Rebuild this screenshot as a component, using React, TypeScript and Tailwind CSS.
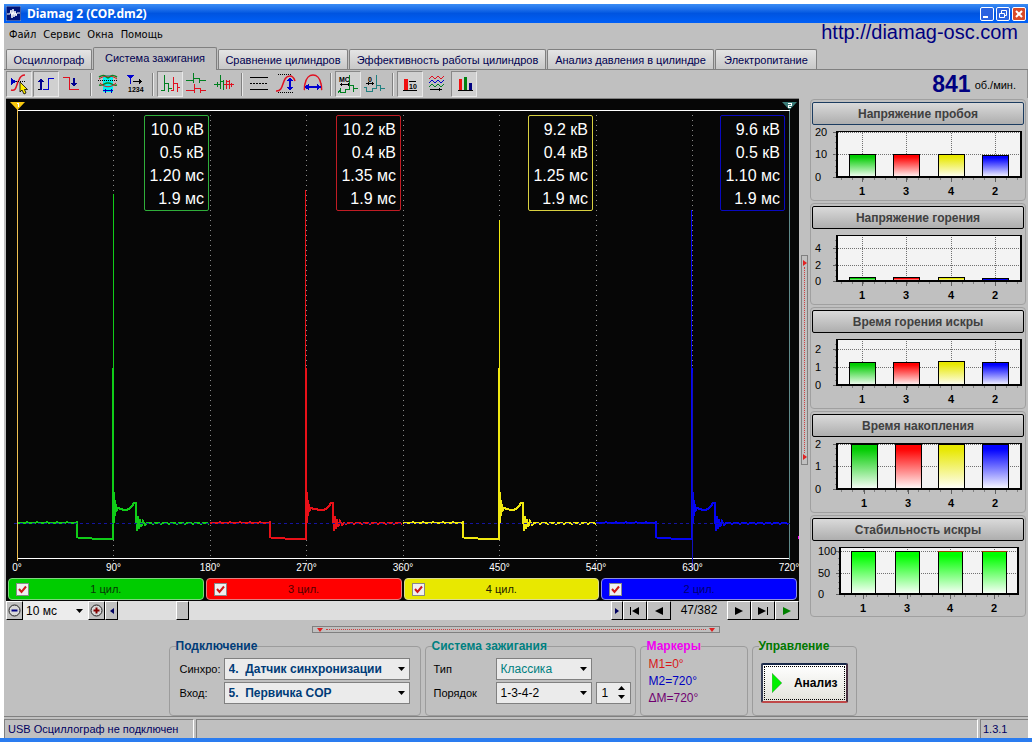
import { useState } from "react";
import type { ReactNode } from "react";

const tabs = [
  { name: "Осциллограф", width: "w-[86px]" },
  { name: "Система зажигания", width: "w-[124px]" },
  { name: "Сравнение цилиндров", width: "w-[130px]" },
  { name: "Эффективность работы цилиндров", width: "w-[197px]" },
  { name: "Анализ давления в цилиндре", width: "w-[167px]" },
  { name: "Электропитание", width: "w-[102px]" },
];

const cylinders = [
  { id: 1, line: "#10cc18", box: "border-[#2fae3a]", bar: "bg-[#00cc00] border-[#7fd67f]", ink: "text-[#063806]", peak: 96, burn: 0, values: ["10.0 кВ", "0.5 кВ", "1.20 мс", "1.9 мс"] },
  { id: 3, line: "#e81018", box: "border-[#c01c24]", bar: "bg-[#ff0000] border-[#e08080]", ink: "text-[#500000]", peak: 92, burn: 4, values: ["10.2 кВ", "0.4 кВ", "1.35 мс", "1.9 мс"] },
  { id: 4, line: "#f0e810", box: "border-[#d8d040]", bar: "bg-[#e8e800] border-[#dcdc90]", ink: "text-[#202000]", peak: 122, burn: 1, values: ["9.2 кВ", "0.4 кВ", "1.25 мс", "1.9 мс"] },
  { id: 2, line: "#0404f4", box: "border-[#0808c0]", bar: "bg-[#0000ff] border-[#9090e0]", ink: "text-[#000070]", peak: 112, burn: 0, values: ["9.6 кВ", "0.5 кВ", "1.10 мс", "1.9 мс"] },
];

const rainbow = ["#00cc00", "#ff0000", "#e8e800", "#0000ff"];
const lime = ["#00ff00", "#00ff00", "#00ff00", "#00ff00"];

type Chart = {
  id: string;
  title: string;
  left: number;
  right: number;
  top: number;
  ticks: [string, number][];
  xs: number[];
  tops: number[];
  colors: string[];
};

const charts: Chart[] = [
  { id: "a", title: "Напряжение пробоя", left: 22, right: 207, top: 5, ticks: [["20", 6], ["10", 28], ["0", 51]], xs: [48, 92, 137, 181], tops: [28, 28, 28, 29], colors: rainbow },
  { id: "b", title: "Напряжение горения", left: 22, right: 207, top: 5, ticks: [["4", 18], ["2", 35], ["0", 51]], xs: [48, 92, 137, 181], tops: [47, 47, 47, 48], colors: rainbow },
  { id: "c", title: "Время горения искры", left: 22, right: 207, top: 5, ticks: [["2", 15], ["1", 33], ["0", 51]], xs: [48, 92, 137, 181], tops: [28, 28, 27, 28], colors: rainbow },
  { id: "d", title: "Время накопления", left: 22, right: 207, top: 5, ticks: [["2", 6], ["1", 28], ["0", 51]], xs: [50, 94, 137, 181], tops: [6, 6, 6, 6], colors: rainbow },
  { id: "e", title: "Стабильность искры", left: 25, right: 204, top: 5, ticks: [["100", 9], ["50", 31], ["0", 52]], xs: [49, 93, 136, 180], tops: [9, 9, 9, 9], colors: lime },
];

// one ignition period of the primary winding, 193 px wide
function wave(x: number, burn: number) {
  let d = `M${x} 425`;
  for (let i = 2; i <= 60; i += 2) d += `L${x + i} ${i % 10 === 0 ? 424 : 425}`;
  d += `V439`;
  for (let i = 62; i <= 94; i += 2) d += `L${x + i} ${i < 76 ? 440 : 441}`;
  d += `H${x + 96}V270V441V398L${x + 97} 422L${x + 98} 402L${x + 98} 418L${x + 99} 406V414`;
  const b = x + burn;
  d += `L${x + 101} 410L${x + 104} 411L${b + 107} 412L${b + 109} 412L${b + 112} 411L${b + 115} 408L${b + 117} 405L${b + 119} 405`;
  d += `V418`;
  return d;
}

function tail(x: number, burn: number) {
  const b = x + burn;
  let d = `M${b + 119} 418V425H${b + 120}V433L${b + 121} 418L${b + 122} 431L${b + 123} 421L${b + 124} 429L${b + 126} 423L${b + 128} 427`;
  for (let i = 130 + burn; i <= 193; i += 2) d += `L${x + i} ${i % 8 < 2 ? 426 : 425}`;
  return d;
}

function Scope() {
  return (
    <div className="relative bg-[#060606]">
      <svg viewBox="0 0 793 479" className="block w-full" shapeRendering="crispEdges" fontFamily='"Liberation Sans", Arial, sans-serif'>
        <path d="M0 0.5H793" stroke="#808080" />
        <path d="M11 12.5H784M11 460.5H784" stroke="#ffffff" />
        <path d="M783.5 13V462" stroke="#5f8a8a" />
        {[1, 2, 3, 4, 5, 6, 7].map((n) => (
          <path key={n} d={`M${Math.floor(11 + n * 96.5) + 0.5} 17V463`} stroke="#8a8a8a" strokeDasharray="1 4" />
        ))}
        {cylinders.map((c, i) => (
          <g key={c.id} fill="none" stroke={c.line}>
            <path d={wave(11 + i * 193, c.burn)} strokeWidth="2" />
            <path d={tail(11 + i * 193, c.burn)} strokeWidth="2" />
            <path d={`M${(i % 2 ? 106.5 : 107.5) + i * 193} ${c.peak}V280`} />
            <path d={`M${108 + i * 193} 394V425`} strokeWidth="2" />
            <path d={`M${131.5 + c.burn + i * 193} 419V430`} strokeWidth="3" />
          </g>
        ))}
        <path d="M8 425.500H784" stroke="#1414a0" strokeDasharray="3 3" />
        <path d="M686.5 275V472" stroke="#1010c0" />
        <path d="M11.5 10V463" stroke="#f0c050" />
        <path d="M4 4H19L11.5 12Z" fill="#f8c810" shapeRendering="auto" />
        <path d="M776 4H791L783.5 12Z" fill="#3a7c78" shapeRendering="auto" />
        <path d="M11 5h1v4" stroke="#ffffff" fill="none" />
        <path d="M782 5.500h3v2h-3v2h3" stroke="#ffffff" fill="none" />
        <g fill="#ffffff" fontSize="10" textAnchor="middle">
          {[0, 90, 180, 270, 360, 450, 540, 630, 720].map((deg) => (
            <text key={deg} x={11 + (deg / 90) * 96.5} y="473">{deg}°</text>
          ))}
        </g>
        <path d="M792 439h1" stroke="#ff00ff" strokeWidth="3" />
      </svg>
      <div className="absolute top-[17px] right-[14px] left-[11px] flex">
        {cylinders.map((c) => (
          <div key={c.id} className="flex flex-1 justify-end">
            <div className={`h-[96px] w-[65px] rounded-xs border pt-[2px] pr-1 text-right text-[16px] leading-[23px] text-white ${c.box}`}>
              {c.values.map((v, i) => (
                <div key={i} className="whitespace-nowrap">{v}</div>
              ))}
            </div>
          </div>
        ))}
      </div>
    </div>
  );
}

function CylinderBar() {
  const [shown, setShown] = useState([1, 2, 3, 4]);
  const toggle = (id: number) => {
    setShown(shown.includes(id) ? shown.filter((s) => s !== id) : [...shown, id]);
  };
  return (
    <div className="flex h-[24px] gap-[2px] bg-[#060606] px-[2px] pt-px pb-px">
      {cylinders.map((c) => (
        <label key={c.id} className={`flex flex-1 items-center rounded-sm border pl-[7px] text-[11px] ${c.bar}`}>
          <input
            type="checkbox"
            checked={shown.includes(c.id)}
            onChange={() => toggle(c.id)}
            className="peer h-[13px] w-[13px] appearance-none border border-[#8a8a8a] bg-[#f0f0f0]"
          />
          <svg viewBox="0 0 13 13" className="-ml-[13px] hidden h-[13px] w-[13px] peer-checked:block">
            <path d="M3 6L5.500 9L10 3.500" fill="none" stroke="#d01818" strokeWidth="2" />
          </svg>
          <span className={`flex-1 pr-[20px] text-center ${c.ink}`}>{c.id} цил.</span>
        </label>
      ))}
    </div>
  );
}

function NavButton({ label, width, children }: { label: string; width: string; children: ReactNode }) {
  return (
    <button aria-label={label} className={`flex items-center justify-center border-t border-r border-b border-l border-t-white border-r-black border-b-black border-l-white bg-[#c0c0c0] ${width}`}>
      {children}
    </button>
  );
}

function PlayBar() {
  return (
    <div className="flex h-[19px] bg-[#dedede]">
      <NavButton label="Уменьшить" width="w-[17px]">
        <svg viewBox="0 0 13 13" className="h-[13px] w-[13px]">
          <circle cx="6.500" cy="6.500" r="5.500" fill="#d8d8d8" stroke="#202020" />
          <path d="M3.500 6.500h6" stroke="#000080" strokeWidth="2" />
        </svg>
      </NavButton>
      <div className="relative w-[65px]">
        <select aria-label="Развертка" className="h-full w-full appearance-none bg-[#ececec] pl-[3px] text-[12px] leading-[16px]">
          <option>10 мс</option>
        </select>
        <Caret />
      </div>
      <NavButton label="Увеличить" width="w-[17px]">
        <svg viewBox="0 0 13 13" className="h-[13px] w-[13px]">
          <circle cx="6.500" cy="6.500" r="5.500" fill="#d8d8d8" stroke="#202020" />
          <path d="M3.500 6.500h6M6.500 3.500v6" stroke="#800000" strokeWidth="2" />
        </svg>
      </NavButton>
      <NavButton label="Назад" width="w-[13px]">
        <svg viewBox="0 0 4 6" className="h-[6px] w-[4px]"><path d="M4 0V6L0 3Z" fill="#000060" /></svg>
      </NavButton>
      <div className="flex flex-1 pl-[58px]">
        <div className="w-[13px] border-t border-r border-b border-l border-t-white border-r-black border-b-black border-l-white bg-[#c0c0c0]" />
      </div>
      <NavButton label="Вперед" width="w-[12px]">
        <svg viewBox="0 0 4 6" className="h-[6px] w-[4px]"><path d="M0 0V6L4 3Z" fill="#000060" /></svg>
      </NavButton>
      <NavButton label="В начало" width="w-[24px]">
        <svg viewBox="0 0 10 8" className="h-[8px] w-[10px]"><path d="M0 0h1v8h-1zM9 0V8L2 4Z" /></svg>
      </NavButton>
      <NavButton label="Предыдущий кадр" width="w-[24px]">
        <svg viewBox="0 0 8 8" className="h-[8px] w-[8px]"><path d="M8 0V8L0 4Z" /></svg>
      </NavButton>
      <span className="w-[56px] bg-[#c0c0c0] text-center text-[12px] leading-[19px]">47/382</span>
      <NavButton label="Следующий кадр" width="w-[24px]">
        <svg viewBox="0 0 8 8" className="h-[8px] w-[8px]"><path d="M0 0V8L8 4Z" /></svg>
      </NavButton>
      <NavButton label="В конец" width="w-[24px]">
        <svg viewBox="0 0 10 8" className="h-[8px] w-[10px]"><path d="M9 0h1v8h-1zM0 0V8L8 4Z" /></svg>
      </NavButton>
      <NavButton label="Воспроизвести" width="w-[24px]">
        <svg viewBox="0 0 8 8" className="h-[8px] w-[8px]"><path d="M0 0V8L8 4Z" fill="#008000" /></svg>
      </NavButton>
    </div>
  );
}

function Caret() {
  return (
    <svg viewBox="0 0 7 4" className="pointer-events-none absolute top-1/2 right-[5px] h-[4px] w-[7px] -translate-y-1/2">
      <path d="M0 0H7L3.500 4Z" />
    </svg>
  );
}

function ChartCard({ chart }: { chart: Chart }) {
  const { id, left, right, top, ticks, xs, tops, colors } = chart;
  const zero = ticks[2][1];
  const barWidth = id === "e" ? 24 : 26;
  const minor = [];
  for (let x = left + 5; x < right; x += 11) minor.push(x);
  const minorY = [];
  for (let y = top + 5; y < zero; y += 6) minorY.push(y);
  return (
    <section className="h-[102px] rounded-sm border border-[#a0a0a0] px-px pt-[2px]">
      <button
        className={`block h-[23px] w-full rounded-xs border bg-linear-to-b from-[#dadada] to-[#aeaeae] text-[12px] leading-[22px] font-bold text-[#404040] ${id === "a" ? "border-[#1c3c60]" : "border-black"}`}
      >
        {chart.title}
      </button>
      <svg viewBox="-2 -1 212 74" className="block w-full" shapeRendering="crispEdges" fontFamily='"Liberation Sans", Arial, sans-serif'>
        <defs>
          {colors.map((c, i) => (
            <linearGradient key={i} id={`fill-${id}-${i}`} x1="0" y1="0" x2="0" y2="1">
              <stop offset="10%" stopColor={c} />
              <stop offset="100%" stopColor="#ffffff" />
            </linearGradient>
          ))}
        </defs>
        <rect x={left + 1} y={top} width={right - left} height={zero - top} fill="#f3f3f3" />
        {ticks.map(([text, y]) => (
          <g key={text}>
            <path d={`M${left} ${y + 0.5}H${right}`} stroke="#707070" strokeDasharray="1 1" />
            <path d={`M${left - 3} ${y + 0.5}H${left}`} stroke="#606060" />
            <text x={id === "e" ? 4 : 1} y={y + 4} fontSize="11" shapeRendering="auto">{text}</text>
          </g>
        ))}
        {xs.map((x) => (
          <path key={x} d={`M${x + 0.5} ${top}V${zero}`} stroke="#707070" strokeDasharray="1 1" />
        ))}
        {minor.map((x) => (
          <path key={x} d={`M${x + 0.5} ${zero}v3`} stroke="#808080" />
        ))}
        {minorY.map((y) => (
          <path key={y} d={`M${left - 1} ${y + 0.5}h2`} stroke="#808080" />
        ))}
        {xs.map((x, i) => (
          <g key={x}>
            <rect x={x - barWidth / 2 + 0.5} y={tops[i] + 0.5} width={barWidth} height={zero - tops[i]} fill={`url(#fill-${id}-${i})`} stroke="#000000" />
            <path d={`M${x + 0.5} ${zero}v5`} stroke="#606060" />
            <text x={x} y={zero + 18} fontSize="11" fontWeight="bold" textAnchor="middle">{[1, 3, 4, 2][i]}</text>
          </g>
        ))}
        {id === "b" && tops.map((y, i) => (
          <path key={i} d={`M${xs[i] - 12} ${y + 1.5}h25`} stroke={colors[i]} />
        ))}
        {id === "e" && [xs[2], xs[3]].map((x) => (
          <path key={x} d={`M${x - 12} 9.500h25`} stroke="#a04000" />
        ))}
        <path d={`M${left} ${top + 0.5}H${right}`} stroke="#000000" />
        <path d={`M${left + 1} ${top}V${zero + 1}M${right} ${top}V${zero + 1}M${left} ${zero}H${right + 1}`} stroke="#000000" strokeWidth="2" fill="none" />
      </svg>
    </section>
  );
}

function Tool({ label, on, children }: { label: string; on?: boolean; children: ReactNode }) {
  return (
    <button
      aria-label={label}
      aria-pressed={!!on}
      className={`flex h-[26px] w-[26px] items-center justify-center border ${on ? "border-t-[#888888] border-r-[#e8e8e8] border-b-[#e8e8e8] border-l-[#888888] bg-[#d0d0d0]" : "border-transparent"}`}
    >
      <svg viewBox="0 0 24 24" className="h-[24px] w-[24px]" fill="none" shapeRendering="crispEdges" fontFamily='"Liberation Sans", Arial, sans-serif'>
        {children}
      </svg>
    </button>
  );
}

function Separator() {
  return <div className="mr-[2px] ml-[3px] h-[23px] w-[2px] border-r border-l border-r-[#e8e8e8] border-l-[#808080]" />;
}

function Toolbar() {
  return (
    <div className="flex items-center gap-px pt-px pl-[2px]">
      <Tool label="Синхронизация" on>
        <path d="M4 18C10 20 9 12 12 8C13 5 15 3 18 3" stroke="#e01020" strokeWidth="1.500" shapeRendering="auto" />
        <path d="M4 6V13L9 9.500Z" fill="#0000c0" />
        <path d="M9 9.500H19" stroke="#000000" strokeDasharray="1 1" />
        <path d="M13 10V20L15 18L17 22L19 21L17.500 17.500H20.500Z" fill="#ffee00" stroke="#000000" strokeWidth="0.800" shapeRendering="auto" />
      </Tool>
      <Tool label="Фронт" on>
        <path d="M4 17.500H7" stroke="#000000" />
        <path d="M7 8V18" stroke="#000090" strokeWidth="2" />
        <path d="M4 10H10L7 6Z" fill="#000090" />
        <path d="M9 17.500H14.500V6.500H20" stroke="#0000d0" />
      </Tool>
      <Tool label="Спад">
        <path d="M2 5.500H8.500V17.500H18" stroke="#e01020" strokeWidth="1.200" />
        <path d="M13 6V13" stroke="#000090" strokeWidth="2" />
        <path d="M10 11H16L13 15Z" fill="#000090" />
      </Tool>
      <Separator />
      <Tool label="Ширина окна">
        <rect x="7" y="3" width="10" height="17" fill="#00f0f0" />
        <path d="M3 5C8 2 9 4 12 6C15 4 16 2 21 5M3 13C8 14 9 10 12 11C15 10 16 14 21 13" stroke="#108020" strokeWidth="1.500" shapeRendering="auto" />
        <path d="M3 7C8 3 16 3 21 7M4 11C9 16 15 16 20 11" stroke="#d02020" shapeRendering="auto" />
        <path d="M2 8.500H22" stroke="#000000" strokeDasharray="1 1" />
        <path d="M7 18.500H17M9 16.500V20.500M15 16.500V20.500" stroke="#0000c0" />
      </Tool>
      <Tool label="Номера">
        <path d="M4 3H11L7.500 7Z" fill="#0000d0" />
        <path d="M7.500 6V12" stroke="#0000d0" />
        <path d="M10 9.500H19M16.500 7V12M17.500 8V11" stroke="#000000" />
        <text x="5" y="20" fontSize="7" fontWeight="bold" fill="#000000">1234</text>
      </Tool>
      <Separator />
      <Tool label="Последовательно" on>
        <path d="M3 18.500H6.500V3M6.500 11.500H10.500V20M10.500 16.500H13.500" stroke="#008020" strokeWidth="1.500" />
        <path d="M13 18.500H15.500V5M15.500 11.500H19.500V20M19.500 15.500H22" stroke="#e01020" strokeWidth="1.500" />
      </Tool>
      <Tool label="Друг под другом">
        <path d="M1 8.500H9M8.500 1V11M8.500 6.500H14.500V11M14.500 8.500H21" stroke="#008020" strokeWidth="1.500" />
        <path d="M1 18.500H10M9.500 12V21M9.500 16.500H15.500V21M15.500 18.500H21" stroke="#e01020" strokeWidth="1.500" />
      </Tool>
      <Tool label="С наложением">
        <path d="M2 12.500H7.500M5.500 10V15M8.500 3V17M11.500 8V18M8.500 9.500H12" stroke="#008020" strokeWidth="1.500" />
        <path d="M12 12.500H22M14.500 8V17M17.500 8V17M14.500 9.500H18M19.500 11V15" stroke="#e01020" strokeWidth="1.500" />
      </Tool>
      <Separator />
      <Tool label="Линии">
        <path d="M3 5.500H21M3 17.500H21" stroke="#000000" />
        <path d="M3 11.500H21" stroke="#000000" strokeDasharray="2 1" />
      </Tool>
      <Tool label="Амплитуда">
        <path d="M2 19C11 20 7 4 16 4C19 4 20 6 21 9" stroke="#e01020" strokeWidth="1.500" shapeRendering="auto" />
        <path d="M4 2.500H18M4 20.500H20" stroke="#000000" strokeDasharray="1 1" />
        <path d="M16 7V18" stroke="#0000d0" strokeWidth="2" />
        <path d="M13 9L16 5L19 9ZM13 15L16 19L19 15Z" fill="#0000d0" />
      </Tool>
      <Tool label="Период">
        <path d="M3 18C4 17 3 15 4 12C6 0 18 0 20 12C21 15 20 17 21 18" stroke="#e01020" strokeWidth="1.500" shapeRendering="auto" />
        <path d="M6 15H18" stroke="#0000d0" strokeWidth="2" />
        <path d="M8 12V18L3 15ZM16 12V18L21 15Z" fill="#0000d0" />
      </Tool>
      <Separator />
      <Tool label="Миллисекунды" on>
        <text x="3" y="10" fontSize="7" fontWeight="bold" fill="#000000">МС</text>
        <path d="M4 12.500H14M5.500 11V14M12.500 11V14" stroke="#000000" />
        <path d="M2 20.500L4.500 17.500V20.500H9.500V17.500H13.500V3M13.500 13.500H17.500V20M17.500 16.500H22" stroke="#008020" strokeWidth="1.500" />
      </Tool>
      <Tool label="Градусы">
        <text x="5" y="10" fontSize="7" fontWeight="bold" fill="#000000">0</text>
        <path d="M3 11.500H11M5.500 10V13M9.500 10V13" stroke="#000000" />
        <path d="M1 15.500H3.500V19.500H9.500V16.500H13.500V3M13.500 13.500H17.500V19M17.500 16.500H22" stroke="#208080" strokeWidth="1.500" />
      </Tool>
      <Separator />
      <Tool label="Среднее за 10" on>
        <rect x="6" y="7" width="4" height="11" fill="#f01010" />
        <path d="M5 18.500H19M11 9.500H18" stroke="#000000" />
        <text x="11" y="17" fontSize="7" fontWeight="bold" fill="#000000">10</text>
      </Tool>
      <Tool label="Массив кадров">
        <path d="M4 7L7 4L10 7L13 4L16 7L19 4" stroke="#e01020" shapeRendering="auto" />
        <path d="M4 11L7 8L10 11L13 8L16 11L19 8" stroke="#0000d0" shapeRendering="auto" />
        <path d="M4 15L7 12L10 15L13 12L16 15L19 12" stroke="#008020" shapeRendering="auto" />
        <path d="M5 17.500H17M14.500 16V19M15.500 17V18" stroke="#000000" />
      </Tool>
      <Tool label="Диаграммы" on>
        <rect x="7" y="7" width="3" height="11" fill="#f01010" />
        <rect x="12" y="5" width="3" height="13" fill="#008010" />
        <rect x="17" y="11" width="3" height="7" fill="#000080" />
        <path d="M6 18.500H21" stroke="#000000" />
      </Tool>
    </div>
  );
}

function Group({ title, color, width, children }: { title: string; color: string; width: string; children: ReactNode }) {
  return (
    <fieldset className={`h-[77px] rounded-sm border border-[#9c9c9c] ${width}`}>
      <legend className={`ml-[6px] text-[12px] leading-[14px] font-bold ${color}`}>{title}</legend>
      {children}
    </fieldset>
  );
}

function Combo({ id, value, className, options }: { id: string; value: string; className: string; options: string[] }) {
  return (
    <div className="relative flex-1">
      <select id={id} defaultValue={value} className={`block h-[22px] w-full appearance-none border border-[#808080] bg-[#ebebeb] pl-[4px] text-[12px] leading-[18px] ${className}`}>
        {options.map((o) => (
          <option key={o}>{o}</option>
        ))}
      </select>
      <Caret />
    </div>
  );
}

function BottomPanel() {
  const [order, setOrder] = useState("1");
  return (
    <div className="flex justify-center gap-[4px] pr-[7px]">
      <Group title="Подключение" color="text-[#003c78]" width="w-[252px]">
        <div className="flex flex-col gap-[2px] px-[10px] pt-[5px]">
          <div className="flex items-center">
            <label htmlFor="sync" className="w-[44px] text-[11px]">Синхро:</label>
            <Combo id="sync" value={"4.\u00a0\u00a0Датчик синхронизации"} options={["4.\u00a0\u00a0Датчик синхронизации"]} className="font-bold text-[#003c78]" />
          </div>
          <div className="flex items-center">
            <label htmlFor="input" className="w-[44px] text-[11px]">Вход:</label>
            <Combo id="input" value={"5.\u00a0\u00a0Первичка COP"} options={["5.\u00a0\u00a0Первичка COP"]} className="font-bold text-[#003c78]" />
          </div>
        </div>
      </Group>
      <Group title="Система зажигания" color="text-[#008080]" width="w-[211px]">
        <div className="flex flex-col gap-[2px] px-2 pt-[5px]">
          <div className="flex items-center pr-[35px]">
            <label htmlFor="kind" className="w-[62px] text-[11px]">Тип</label>
            <Combo id="kind" value="Классика" options={["Классика"]} className="text-[#008080]" />
          </div>
          <div className="flex items-center">
            <label htmlFor="order" className="w-[62px] text-[11px]">Порядок</label>
            <Combo id="order" value="1-3-4-2" options={["1-3-4-2", "1-2-4-3"]} className="text-black" />
            <div className="relative -mr-[4px] ml-1 w-[35px]">
              <input
                aria-label="Первый цилиндр"
                value={order}
                onChange={(e) => setOrder(e.target.value)}
                className="block h-[22px] w-full border border-[#808080] bg-[#ebebeb] pl-[5px] text-[12px]"
              />
              <svg viewBox="0 0 7 13" className="pointer-events-none absolute top-[4px] right-[6px] h-[13px] w-[7px]">
                <path d="M0 4H7L3.500 0ZM0 9H7L3.500 13Z" />
              </svg>
            </div>
          </div>
        </div>
      </Group>
      <Group title="Маркеры" color="text-[#f000f0]" width="w-[108px]">
        <div className="pt-[3px] pl-[8px] text-[12px] leading-[17px]">
          <p className="text-[#d81818]">M1=0°</p>
          <p className="text-[#0000c0]">M2=720°</p>
          <p className="text-[#700070]">ΔM=720°</p>
        </div>
      </Group>
      <Group title="Управление" color="text-[#007800]" width="w-[105px]">
        <div className="px-2 pt-[10px]">
          <button className="h-[40px] w-full rounded-xs border-2 border-t-[#182848] border-r-[#483040] border-b-[#c04848] border-l-[#384058] bg-linear-to-b from-white to-[#e4e4dc] p-px">
            <span className="flex h-full items-center justify-between border border-dotted border-black pr-[6px] pl-[7px] text-[12px] font-bold">
              <svg viewBox="0 0 10 20" className="h-[20px] w-[10px]">
                <path d="M0 0L10 10L0 20Z" fill="#00f000" stroke="#909090" strokeWidth="0.500" />
              </svg>
              Анализ
            </span>
          </button>
        </div>
      </Group>
    </div>
  );
}

export default function App() {
  const [tab, setTab] = useState(1);
  return (
    <div className="flex min-h-screen flex-col bg-white px-1 pt-1 font-['Liberation_Sans',Arial,sans-serif] text-[12px] text-black">
      <header className="flex h-[19px] items-center bg-linear-to-b from-[#3a8cf4] via-[#0054e0] to-[#0060f8] pr-[2px] pl-[2px]">
        <svg viewBox="0 0 15 15" className="h-[15px] w-[15px]">
          <rect width="15" height="15" fill="#001478" stroke="#80a8e0" />
          <path d="M1 8H4L5 4L6 12L7 3L8 11L9 5L10 10L11 7H14" fill="none" stroke="#ffffff" />
        </svg>
        <h1 className="flex-1 pl-[6px] font-['Noto_Sans',sans-serif] text-[12px] leading-[19px] font-bold text-white">Diamag 2 (COP.dm2)</h1>
        <div className="flex gap-[2px]">
          <button aria-label="Свернуть" className="flex h-[14px] w-[14px] rounded-xs border border-white bg-[#2a62e0] p-[2px]">
            <svg viewBox="0 0 8 8" className="h-[8px] w-[8px]"><path d="M0 7H5" stroke="#ffffff" strokeWidth="2" /></svg>
          </button>
          <button aria-label="Восстановить" className="flex h-[14px] w-[14px] rounded-xs border border-white bg-[#2a62e0] p-[2px]">
            <svg viewBox="0 0 8 8" className="h-[8px] w-[8px]" fill="none" stroke="#ffffff"><path d="M2.500 3V0.500H7.500V5.500H6M0.500 3.500H5.500V7.500H0.500Z" /></svg>
          </button>
          <button aria-label="Закрыть" className="flex h-[14px] w-[14px] rounded-xs border border-white bg-[#d84a28] p-[2px]">
            <svg viewBox="0 0 8 8" className="h-[8px] w-[8px]"><path d="M1 1L7 7M7 1L1 7" stroke="#ffffff" strokeWidth="2" /></svg>
          </button>
        </div>
      </header>

      <main className="flex flex-1 flex-col bg-[#c0c0c0]">
        <div className="flex h-[24px] justify-between">
          <nav className="flex gap-[7px] pl-[5px] font-['DejaVu_Sans_Condensed','DejaVu_Sans',sans-serif] text-[11px] leading-[24px]">
            <button>Файл</button>
            <button>Сервис</button>
            <button>Окна</button>
            <button>Помощь</button>
          </nav>
          <a href="http://diamag-osc.com" className="pr-[10px] text-[20px] leading-[19px] text-[#000080]">http://diamag-osc.com</a>
        </div>

        <div role="tablist" className="flex h-[23px] items-end border-b border-[#808080] pl-[2px]">
          {tabs.map((t, i) => (
            <button
              key={t.name}
              role="tab"
              aria-selected={tab === i}
              onClick={() => setTab(i)}
              className={`mr-px rounded-t-xs border-t border-r border-l border-[#808080] text-[11px] leading-[18px] whitespace-nowrap text-[#000050] ${t.width} ${tab === i ? "-mb-px h-[23px] bg-[#c0c0c0] pb-[2px]" : "h-[20px] bg-linear-to-b from-[#e4e4e4] to-[#c8c8c8]"}`}
            >
              {t.name}
            </button>
          ))}
        </div>

        <div className="flex items-start justify-between border-r border-[#909090]">
          <Toolbar />
          <p className="flex items-center gap-[4px] pr-[11px]">
            <strong className="text-[23px] leading-[28px] text-[#000080]">841</strong>
            <span className="pt-[3px] text-[11px]">об./мин.</span>
          </p>
        </div>

        <div className="flex">
          <div className="ml-[2px] min-w-0 flex-1">
            <Scope />
            <CylinderBar />
            <PlayBar />
          </div>
          <div className="mx-[2px] flex w-[7px] flex-col pt-[157px]">
            <div className="flex h-[210px] flex-col items-center justify-between border border-[#808080] py-[4px]">
              <svg viewBox="0 0 4 6" className="h-[6px] w-[4px]"><path d="M0 0V6L4 3Z" fill="#e02020" /></svg>
              <div className="h-[186px] border-l border-dotted border-[#d04040]" />
              <svg viewBox="0 0 4 6" className="h-[6px] w-[4px]"><path d="M0 0V6L4 3Z" fill="#e02020" /></svg>
            </div>
          </div>
          <aside className="mr-[2px] flex w-[216px] flex-col gap-[2px] pt-px">
            {charts.map((c) => (
              <ChartCard key={c.id} chart={c} />
            ))}
          </aside>
        </div>

        <div className="mx-auto mt-[6px] mb-[6px] flex h-[7px] w-[408px] items-center justify-between border border-[#808080] px-[4px]">
          <svg viewBox="0 0 6 4" className="h-[4px] w-[6px]"><path d="M0 0H6L3 4Z" fill="#e02020" /></svg>
          <div className="w-[380px] border-t border-dotted border-[#d04040]" />
          <svg viewBox="0 0 6 4" className="h-[4px] w-[6px]"><path d="M0 0H6L3 4Z" fill="#e02020" /></svg>
        </div>

        <BottomPanel />

        <footer className="mt-auto flex h-[22px] gap-[2px] border-t border-[#808080] pt-[2px] text-[11px] leading-[18px] text-[#000060]">
          <div className="w-[190px] border-t border-r border-l border-t-[#808080] border-r-white border-l-[#808080] pl-[3px]">USB Осциллограф не подключен</div>
          <div className="flex-1 border-t border-r border-l border-t-[#808080] border-r-white border-l-[#808080]" />
          <div className="w-[48px] border-t border-l border-[#808080] pl-[2px]">1.3.1</div>
        </footer>
      </main>
      <div className="-mx-1 h-[4px] bg-[#2a7cf0]" />
    </div>
  );
}
